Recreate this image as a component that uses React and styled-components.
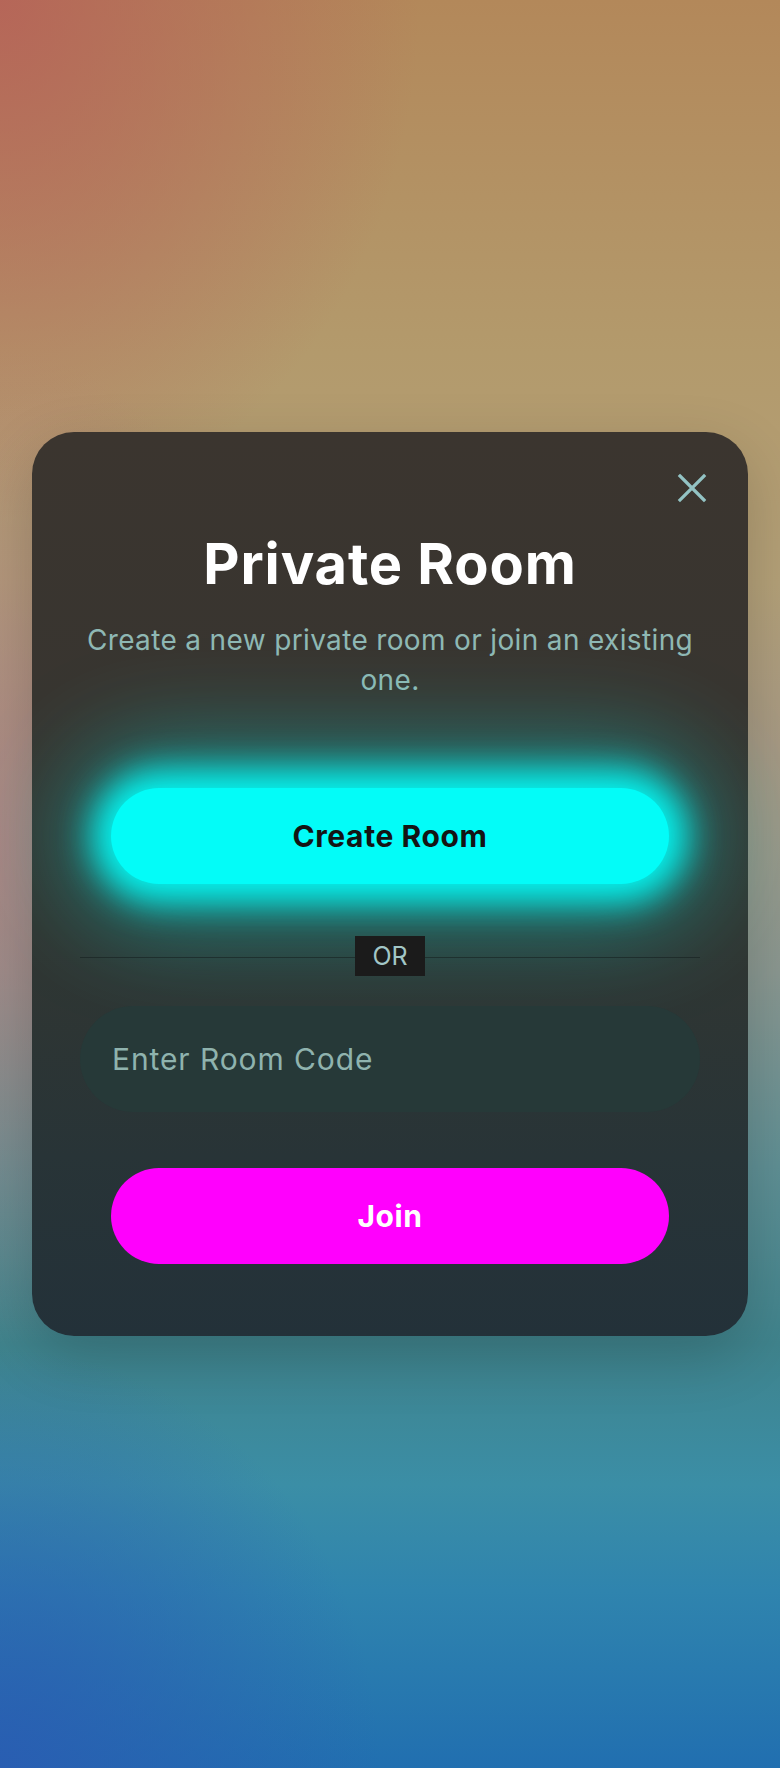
import React from 'react';
import styled, { createGlobalStyle } from 'styled-components';

const GlobalStyle = createGlobalStyle`
    html, body {
        margin: 0;
        padding: 0;
    }
    body {
        font-family: Inter, "Noto Sans", "Liberation Sans", sans-serif;
        background: #2a6fb0;
    }
    * {
        box-sizing: border-box;
    }
`;

const Page = styled.div`
    min-height: 100vh;
    display: flex;
    align-items: center;
    justify-content: center;
    padding: 0 32px;
    background:
        radial-gradient(ellipse 420px 520px at 0% 0%, rgba(182, 96, 88, 0.85), rgba(182, 96, 88, 0) 100%),
        radial-gradient(ellipse 300px 500px at 0% 48%, rgba(176, 128, 130, 0.7), rgba(176, 128, 130, 0) 100%),
        radial-gradient(ellipse 380px 420px at 0% 100%, rgba(42, 92, 178, 0.9), rgba(42, 92, 178, 0) 100%),
        linear-gradient(180deg,
            #b3885a 0%,
            #b39a6c 20%,
            #b3a078 33%,
            #a89a84 42%,
            #8a9790 55%,
            #5f8f94 66%,
            #3f838c 76%,
            #3b8ea6 84%,
            #2f84ae 90%,
            #216fb0 100%);
`;

const Modal = styled.div`
    width: 100%;
    max-width: 716px;
    display: flex;
    flex-direction: column;
    align-items: center;
    padding: 40px 48px 72px;
    border-radius: 42px;
    background: linear-gradient(180deg,
        #3b352f 0%,
        #383530 30%,
        #313632 55%,
        #283437 80%,
        #233139 100%);
    box-shadow: 0 20px 60px rgba(0, 0, 0, 0.18);
`;

const CloseRow = styled.div`
    align-self: stretch;
    display: flex;
    justify-content: flex-end;
    margin-right: -8px;
`;

const CloseButton = styled.button`
    width: 32px;
    height: 32px;
    padding: 0;
    border: none;
    background: none;
    display: flex;
    align-items: center;
    justify-content: center;
    cursor: pointer;
`;

const Title = styled.h1`
    margin: 27px 0 0;
    font-size: 56px;
    line-height: 67px;
    font-weight: 700;
    color: #ffffff;
    text-align: center;
    letter-spacing: 0.9px;
`;

const Subtitle = styled.p`
    margin: 22px 0 0;
    font-size: 28px;
    line-height: 40px;
    font-weight: 400;
    letter-spacing: 0.35px;
    color: #8fb8b4;
    text-align: center;
`;

const PillButton = styled.button`
    width: 90%;
    height: 96px;
    margin-top: ${p => p.$gap}px;
    border: none;
    border-radius: 48px;
    font-family: inherit;
    font-size: 30px;
    font-weight: 700;
    letter-spacing: 0.6px;
    cursor: pointer;
    color: ${p => p.$text};
    background: ${p => p.$bg};
    box-shadow: ${p => p.$glow || 'none'};
`;

const Divider = styled.div`
    align-self: stretch;
    margin-top: 52px;
    height: 40px;
    display: flex;
    align-items: center;
    justify-content: center;
    position: relative;

    &::before {
        content: '';
        position: absolute;
        left: 0;
        right: 0;
        top: 21px;
        height: 1px;
        background: rgba(20, 30, 30, 0.55);
    }
`;

const OrLabel = styled.span`
    position: relative;
    height: 40px;
    padding: 0 17px;
    display: flex;
    align-items: center;
    background: #1b1b1b;
    color: #a2c6c6;
    font-size: 25px;
    font-weight: 400;
`;

const CodeInput = styled.input`
    align-self: stretch;
    margin-top: 30px;
    height: 106px;
    padding: 0 32px;
    border: none;
    border-radius: 53px;
    outline: none;
    background: #263938;
    font-family: inherit;
    font-size: 30px;
    letter-spacing: 0.9px;
    color: #d8ecea;

    &::placeholder {
        color: #8fb3ae;
    }
`;

const CloseIcon = () => (
    <svg width="30" height="30" viewBox="0 0 30 30" fill="none">
        <path d="M3 3 L27 27 M27 3 L3 27" stroke="#93c3c4" strokeWidth="3.2" strokeLinecap="square" />
    </svg>
);

export default function App() {
    return (
        <>
            <GlobalStyle />
            <Page>
                <Modal>
                    <CloseRow>
                        <CloseButton aria-label="Close">
                            <CloseIcon />
                        </CloseButton>
                    </CloseRow>
                    <Title>Private Room</Title>
                    <Subtitle>Create a new private room or join an existing one.</Subtitle>
                    <PillButton
                        $gap={88}
                        $bg="#03fcf8"
                        $text="#141414"
                        $glow="0 0 34px 18px rgba(3, 252, 248, 0.95), 0 0 100px 40px rgba(3, 252, 248, 0.4)"
                    >
                        Create Room
                    </PillButton>
                    <Divider>
                        <OrLabel>OR</OrLabel>
                    </Divider>
                    <CodeInput placeholder="Enter Room Code" />
                    <PillButton $gap={56} $bg="#ff00fd" $text="#ffffff">
                        Join
                    </PillButton>
                </Modal>
            </Page>
        </>
    );
}
